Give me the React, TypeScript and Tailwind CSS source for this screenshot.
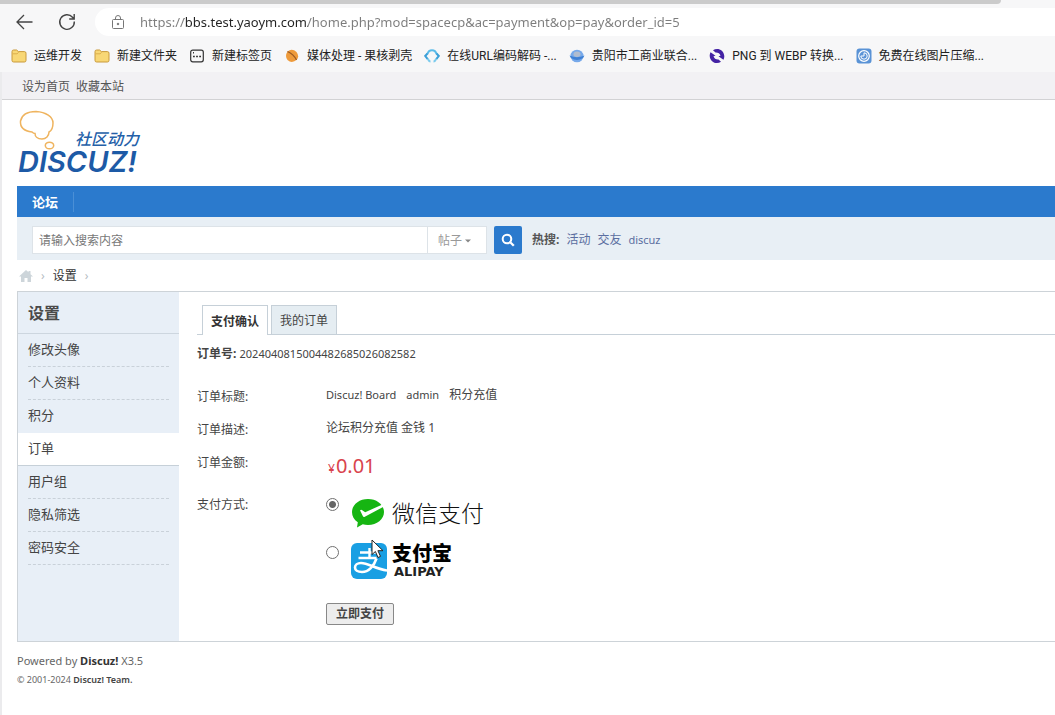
import type { ReactNode } from "react";
import { useState } from "react";

const sans = "font-['Noto_Sans','Noto_Sans_CJK_SC',sans-serif]";

function FolderIcon() {
  return (
    <svg viewBox="0 0 16 14" className="h-3.5 w-4" aria-hidden="true">
      <path d="M1 2.6Q1 1 2.6 1h3l1.8 1.6h6Q15 2.600 15 4.200v7.200Q15 13 13.400 13H2.600Q1 13 1 11.400z" fill="#f8d775" stroke="#c99a3c" />
      <path d="M1.500 4.800h4.600l1.500-1.400" fill="none" stroke="#dcae4c" />
    </svg>
  );
}

function NewTabIcon() {
  return (
    <svg viewBox="0 0 16 14" className="h-3.5 w-4" aria-hidden="true">
      <rect x="1.700" y="1.200" width="12.600" height="11.600" rx="2" fill="none" stroke="#333" strokeWidth="1.200" />
      <path d="M4 3.800h1M4 7.500h1.800M7.100 7.500h1.800M10.200 7.500H12" stroke="#333" strokeWidth="1.500" />
    </svg>
  );
}

function NutIcon() {
  return (
    <svg viewBox="-1 0 16 14" className="h-3.5 w-4" aria-hidden="true">
      <path d="M2.500 2.500Q7-1 11.500 3q3 4 .5 7.500-5 4.500-9.500.5-3-4 0-8.500z" fill="#ee9b3c" />
      <path d="M2.500 2.500q6 2.500 9 8.500" fill="none" stroke="#9a5a24" strokeWidth="1.300" />
    </svg>
  );
}

function CodeIcon() {
  return (
    <svg viewBox="0 0 16 14" className="h-3.5 w-4" fill="none" strokeWidth="2" aria-hidden="true">
      <path d="M3.500 5Q4.500 1.300 8 1.300T12.500 5" stroke="#5bbbe8" />
      <path d="M3.500 9.500q1.500 3 3 3M12.500 9.500q-1.500 3-3 3" stroke="#7ccbed" />
      <path d="M3.500 4.500L1.200 7l2.300 2.800M12.500 4.500L14.800 7l-2.300 2.800" stroke="#3b9fd8" />
    </svg>
  );
}

function EmblemIcon() {
  return (
    <svg viewBox="0 0 16 14" className="h-3.5 w-4" aria-hidden="true">
      <ellipse cx="8" cy="7" rx="6.500" ry="6.300" fill="#77a9ea" />
      <path d="M.5 6.500Q8 10 15.500 6.500L14 9Q8 13 2 9z" fill="#3f80d4" />
      <ellipse cx="8" cy="5.200" rx="3.500" ry="2.700" fill="#b0bccf" />
    </svg>
  );
}

function ConvertIcon() {
  return (
    <svg viewBox="0 0 16 16" className="size-4" fill="#4423a4" aria-hidden="true">
      <path d="M4 2.200C8-.6 14.800 1.200 15.300 8c0 1.600-.3 2.700-.9 3.800L9.500 8.300l2-.6C11 5.500 8.800 4.300 6.500 4.500z" />
      <path d="M12 13.800C8 16.600 1.200 14.800.7 8c0-1.600.3-2.700.9-3.800l4.900 3.500-2 .6c.5 2.200 2.700 3.400 5 3.200z" />
    </svg>
  );
}

function CompressIcon() {
  return (
    <svg viewBox="0 0 16 16" className="size-4" aria-hidden="true">
      <rect x=".5" y=".5" width="15" height="15" rx="3" fill="#5a93d6" />
      <circle cx="8" cy="8" r="5.300" fill="none" stroke="#fff" strokeWidth="1.200" />
      <path d="M8 4.800A3.200 3.200 0 1 1 4.800 8H8z" fill="none" stroke="#fff" />
    </svg>
  );
}

const bookmarks: { label: string; icon: ReactNode }[] = [
  { label: "运维开发", icon: <FolderIcon /> },
  { label: "新建文件夹", icon: <FolderIcon /> },
  { label: "新建标签页", icon: <NewTabIcon /> },
  { label: "媒体处理 - 果核剥壳", icon: <NutIcon /> },
  { label: "在线URL编码解码 -...", icon: <CodeIcon /> },
  { label: "贵阳市工商业联合...", icon: <EmblemIcon /> },
  { label: "PNG 到 WEBP 转换...", icon: <ConvertIcon /> },
  { label: "免费在线图片压缩...", icon: <CompressIcon /> },
];

function Browser() {
  return (
    <header className="bg-[#f7f7f8]">
      <div className="mr-[54px] h-1 rounded-br-lg bg-[#cbcbcb]" />
      <div className="flex h-8 items-end">
        <div className="flex h-7 w-[95px] shrink-0 items-center gap-6 pl-4">
          <button aria-label="后退" className="text-[#444]">
            <svg viewBox="0 0 18 18" className="size-[18px]" fill="none" stroke="currentColor" strokeWidth="1.300">
              <path d="M16.500 9H1.200M8 2L1 9l7 7" />
            </svg>
          </button>
          <button aria-label="刷新" className="text-[#444]">
            <svg viewBox="0 0 18 18" className="size-[18px]" fill="none" stroke="currentColor" strokeWidth="1.400">
              <path d="M16.300 8.500A7.300 7.300 0 1 1 14.500 4.200L16 5.800M16.200 1v5h-5" />
            </svg>
          </button>
        </div>
        <label className="flex h-7 min-w-0 flex-1 items-center rounded-l-full bg-white pl-4">
          <svg viewBox="0 0 14 16" className="h-4 w-3.5 shrink-0" fill="none" stroke="#777" aria-hidden="true">
            <rect x="1.500" y="5.500" width="11" height="9" rx="1" />
            <path d="M4.500 5.500V4a2.500 2.500 0 0 1 5 0v1.500" />
            <circle cx="7" cy="10" r=".8" fill="#555" />
          </svg>
          <input
            aria-label="地址"
            defaultValue="https://bbs.test.yaoym.com/home.php?mod=spacecp&ac=payment&op=pay&order_id=5"
            className="ml-[15px] h-7 min-w-0 flex-1 bg-[linear-gradient(90deg,#7c7c7c_44px,#222_44px,#222_168px,#7c7c7c_168px)] bg-clip-text font-['Noto_Sans',sans-serif] text-[13px] text-transparent outline-none"
          />
        </label>
      </div>
      <nav className="flex h-9 items-center gap-3 overflow-hidden pl-[11px] pt-[3px] font-['Roboto','Noto_Sans_CJK_SC',sans-serif] text-[12px] leading-4 text-[#222]">
        {bookmarks.map((b) => (
          <a key={b.label} href="#" className="flex shrink-0 items-center gap-[7px] whitespace-nowrap">
            {b.icon}
            {b.label}
          </a>
        ))}
      </nav>
    </header>
  );
}

function Logo() {
  return (
    <svg viewBox="0 0 130 66" className="h-[66px] w-[130px] overflow-visible" role="img" aria-label="Discuz! 社区动力">
      <path
        d="M15 22C7 21 3 17 3.500 11 5 4 11 1.500 19 1.500 29 2 36 7 36 13c0 5-2 8-4 9 0 4-3 7-7 7-5 0-7-3-7-5.500-1 0-2-.5-3-1.500z"
        fill="none"
        stroke="#efb45f"
        strokeWidth="1.500"
      />
      <ellipse cx="32.500" cy="35.500" rx="4.200" ry="3.300" fill="none" stroke="#efb45f" strokeWidth="1.500" />
      <text x="58" y="35" fontSize="16" fontWeight="500" fontStyle="italic" fill="#2460a8" fontFamily="Inter, 'Noto Sans CJK SC', sans-serif">
        社区动力
      </text>
      <text x="1" y="62" fontSize="29" fontWeight="600" fontStyle="italic" fill="#1d5aa6" fontFamily="Inter, sans-serif">
        DISCUZ!
      </text>
    </svg>
  );
}

function SearchBar() {
  return (
    <form className="flex h-[43px] items-center bg-[#e8eff5] pl-[15px] pt-[3px]" onSubmit={(e) => e.preventDefault()}>
      <div className="flex h-7 w-[455px] border border-[#dde3e8] bg-white">
        <input
          aria-label="搜索内容"
          placeholder="请输入搜索内容"
          className="min-w-0 flex-1 px-1.5 pt-0.5 text-[12px] text-[#444] outline-none placeholder:text-[#777]"
        />
        <div className="flex w-[59px] items-center border-l border-[#dde3e8] pl-2.5 pt-0.5">
          <select aria-label="搜索类型" className="appearance-none bg-transparent text-[12px] text-[#999] outline-none">
            <option>帖子</option>
          </select>
          <svg viewBox="0 0 6 4" className="ml-0.5 h-1 w-1.5" aria-hidden="true">
            <path d="M0 .5h6L3 3.500z" fill="#888" />
          </svg>
        </div>
      </div>
      <button aria-label="搜索" className="ml-[7px] flex size-7 items-center justify-center rounded-xs bg-[#2b7acd]">
        <svg viewBox="0 0 14 14" className="size-3.5" fill="none" stroke="#fff">
          <circle cx="6" cy="6" r="4.300" strokeWidth="2" />
          <path d="M9.200 9.200l3.600 3.600" strokeWidth="2.300" />
        </svg>
      </button>
      <div className="ml-2.5 flex gap-[7px] text-[12px] leading-5 text-[#5a6ea0]">
        <strong className="font-bold text-[#555]">热搜:</strong>
        <a href="#">活动</a>
        <a href="#">交友</a>
        <a href="#" className="text-[11px]">discuz</a>
      </div>
    </form>
  );
}

const menu = ["修改头像", "个人资料", "积分", "订单", "用户组", "隐私筛选", "密码安全"];

function Sidebar() {
  return (
    <aside className="w-[161px] shrink-0 bg-[#e8eff7]">
      <h2 className="flex h-[42px] items-center border-b border-[#cdd6df] pl-2.5 text-[16px] font-bold text-[#4a4a4a]">设置</h2>
      <ul className="text-[13px] text-[#444]">
        {menu.map((item) =>
          item === "订单" ? (
            <li key={item} className="flex h-[33px] items-center border-b border-[#c6d0d8] bg-white pl-2.5">
              <a href="#" aria-current="page">{item}</a>
            </li>
          ) : (
            <li key={item} className="mx-2.5">
              <a
                href="#"
                className={`flex h-[33px] items-center border-b ${item === "积分" ? "border-transparent" : "border-dashed border-[#c9d1d9]"}`}
              >
                {item}
              </a>
            </li>
          ),
        )}
      </ul>
    </aside>
  );
}

function WechatPay() {
  return (
    <span className="flex items-center gap-[7px]">
      <svg viewBox="0 0 34 30" className="h-[30px] w-[34px]" aria-hidden="true">
        <path d="M17 1C26 1 33 6.800 33 14s-7 13-16 13c-2 0-3.600-.2-5.200-.7L6 29.500l.8-5.300C3 21.800 1 18.200 1 14 1 6.800 8 1 17 1z" fill="#16b512" />
        <path d="M9 12.200q1.200-1 2.600.2l2.600 1.800L32 6.300q1 1.200 1 2.200L13.800 18.800q-1.400.6-2-.8z" fill="#fff" />
      </svg>
      <span className="text-[23px] font-light leading-7 text-[#111]">微信支付</span>
    </span>
  );
}

function Alipay() {
  return (
    <span className="relative flex items-center gap-[5px]">
      <svg viewBox="0 0 36 36" className="size-9" aria-hidden="true">
        <rect width="36" height="36" rx="6" fill="#199fe3" />
        <g fill="none" stroke="#fff">
          <path d="M9 9.500h19M18.500 5v11M7.500 15h18" strokeWidth="2.400" />
          <path
            d="M25.500 15.500C23 23 17.500 29 11 29c-4.500 0-7-1.800-7-4.500 0-2.500 2.500-4.500 6-4.500 7.500 0 14 6 26 7.500"
            strokeWidth="2.600"
          />
        </g>
      </svg>
      <span className="flex flex-col">
        <span className="text-[20px] font-black leading-[22px] text-black">支付宝</span>
        <span className="pl-0.5 font-['DejaVu_Sans',sans-serif] text-[13px] font-bold leading-[14px] text-[#222]">ALIPAY</span>
      </span>
      <svg viewBox="0 0 13 20" className="absolute -top-1 left-5 h-5 w-[13px]" aria-hidden="true">
        <path d="M1 1v14.500l3.400-3 2.600 6 2.500-1.100-2.600-5.700H12z" fill="#fff" stroke="#222" />
      </svg>
    </span>
  );
}

function PayForm() {
  const [method, setMethod] = useState("wechat");
  const radio =
    "mt-[9px] size-[13px] shrink-0 appearance-none rounded-full border border-[#707070] bg-white checked:bg-[radial-gradient(circle,#666_0_3px,white_4px)]";
  return (
    <main className="min-w-0 flex-1 pl-[18px] pt-[13px] text-[12px] text-[#444]">
      <div className="flex h-[30px] items-stretch gap-[3px] border-b border-[#c6d0d8] pl-[5px]">
        <a href="#" className="-mb-px flex items-center border border-b-0 border-[#c6d0d8] bg-white px-2 pt-0.5 font-bold text-[#333]">
          支付确认
        </a>
        <a href="#" className="flex items-center border border-b-0 border-[#c6d0d8] bg-[#e5edf2] px-2 pt-0.5">我的订单</a>
      </div>
      <p className="pt-[9px] leading-5">
        <strong className="font-bold">订单号:</strong> <span className="text-[11px]">2024040815004482685026082582</span>
      </p>
      <form className="mt-4" onSubmit={(e) => e.preventDefault()}>
        <dl className="grid grid-cols-[129px_1fr] leading-[34px]">
          <dt className="h-[33px]">订单标题:</dt>
          <dd className="flex gap-2.5 leading-[30px]">
            <span className="text-[11px]">Discuz! Board</span>
            <span className="text-[11px]">admin</span>
            <span>积分充值</span>
          </dd>
          <dt className="h-[33px]">订单描述:</dt>
          <dd className="leading-[30px]">论坛积分充值 金钱 1</dd>
          <dt className="h-[42px]">订单金额:</dt>
          <dd className="pl-0.5 leading-10 text-[#d9434d]">
            ¥<span className="pl-px text-[20px]">0.01</span>
          </dd>
          <dt className="leading-8">支付方式:</dt>
          <dd className="flex flex-col leading-none">
            <label className="flex h-12 items-start gap-3">
              <input type="radio" name="pay" aria-label="微信支付" className={radio} checked={method === "wechat"} onChange={() => setMethod("wechat")} />
              <span className="flex h-12 items-center"><WechatPay /></span>
            </label>
            <label className="flex h-12 items-start gap-3">
              <input type="radio" name="pay" aria-label="支付宝" className={radio} checked={method === "alipay"} onChange={() => setMethod("alipay")} />
              <span className="flex h-12 items-center"><Alipay /></span>
            </label>
            <button className="mb-4 mt-[18px] h-[22px] self-start rounded-xs border border-[#888] bg-[#ededed] px-[9px] text-[12px] font-bold text-[#444]">
              立即支付
            </button>
          </dd>
        </dl>
      </form>
    </main>
  );
}

export default function App() {
  return (
    <div className={`min-h-screen overflow-hidden bg-white ${sans}`}>
      <Browser />
      <div className="min-h-[643px] border-l-2 border-[#ebebed]">
        <div className="flex h-7 items-center gap-1.5 border-b border-[#d2d2d4] bg-[#f2f1f4] pl-5 pt-0.5 text-[12px] leading-4 text-[#555]">
          <a href="#">设为首页</a>
          <a href="#">收藏本站</a>
        </div>
        <div className="pl-[15px]">
          <div className="pb-[10px] pt-[10px]">
            <Logo />
          </div>
          <nav className="flex h-[31px] items-center bg-[#2b7acd] text-[13px] font-bold text-white">
            <a href="#" className="border-r border-[#4a8fd6] px-[15px] leading-5">论坛</a>
          </nav>
          <SearchBar />
          <nav className="flex h-[31px] items-center gap-2 pl-0.5 text-[12px] text-[#333]">
            <a href="#" aria-label="首页">
              <svg viewBox="0 0 14 12" className="h-3 w-3.5">
                <path d="M7 0l2.500 2.300V1h2v3.200L14 6.500h-2V12H8.500V8h-3v4H2V6.500H0z" fill="#cdd5da" />
              </svg>
            </a>
            <span className="text-[#b5bcc2]">›</span>
            <a href="#">设置</a>
            <span className="text-[#b5bcc2]">›</span>
          </nav>
          <div className="flex min-h-[350px] border-y border-l border-[#cdd3d8]">
            <Sidebar />
            <PayForm />
          </div>
          <footer className="pt-[9px] text-[#666]">
            <p className="text-[11px] leading-5">
              Powered by <strong className="text-[#333]">Discuz!</strong> X3.5
            </p>
            <p className="text-[9px] leading-[18px]">
              © 2001-2024 <span className="font-semibold text-[#444]">Discuz! Team.</span>
            </p>
          </footer>
        </div>
      </div>
    </div>
  );
}
